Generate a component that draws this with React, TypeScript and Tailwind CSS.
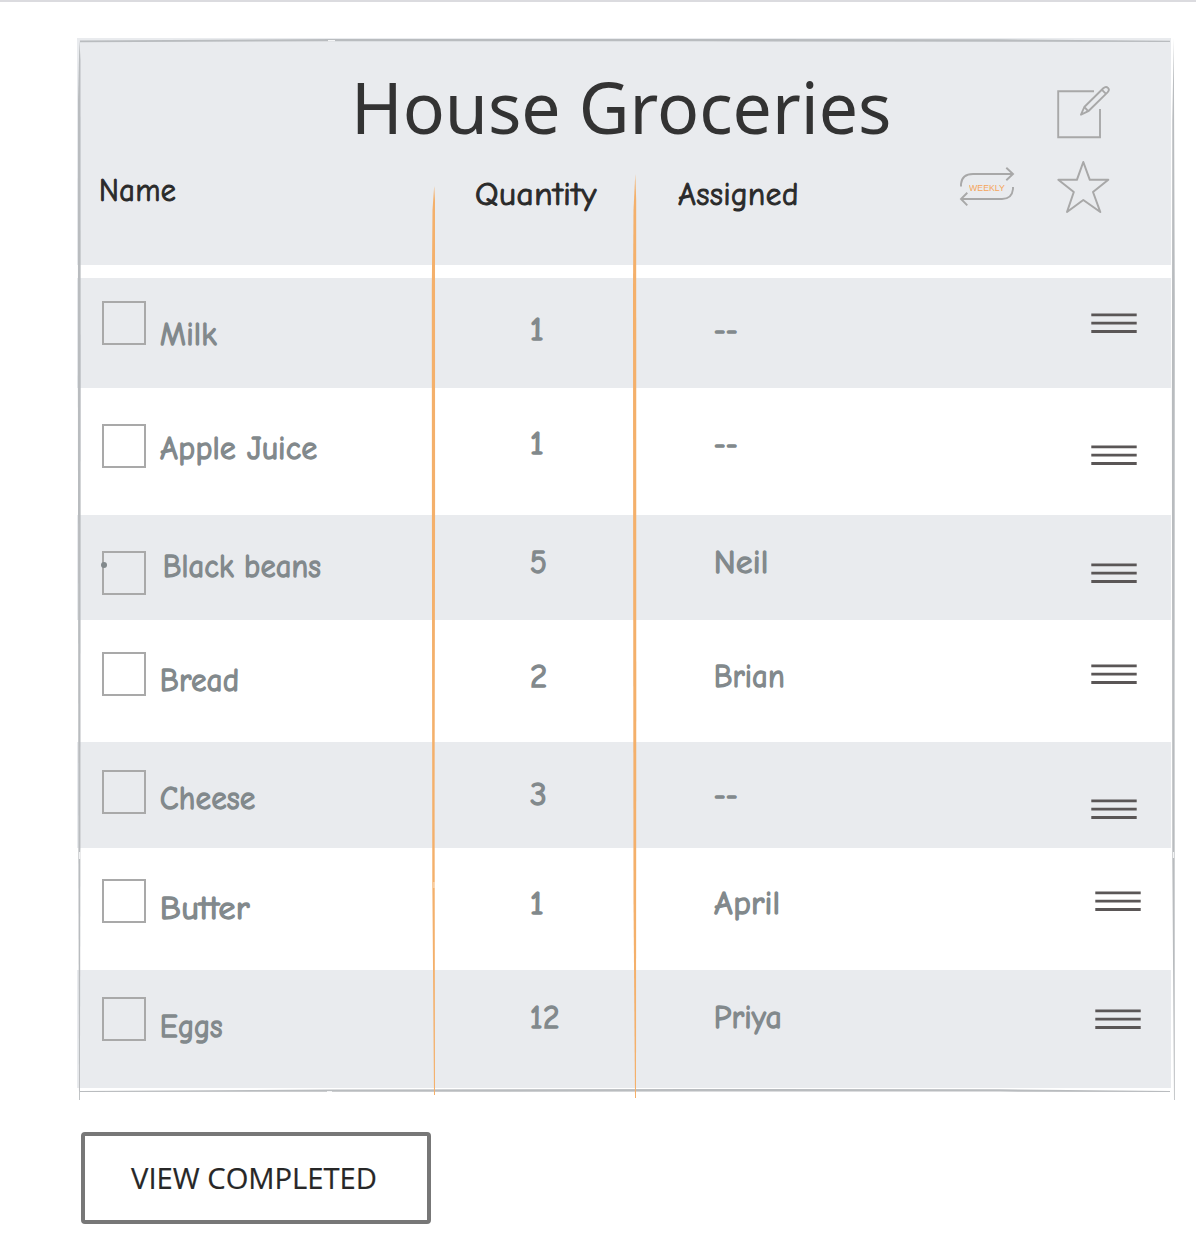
import { useLayoutEffect, useRef, useState } from "react";

/** Text squeezed or stretched horizontally so its advance equals `width`. */
function Fit({ text, width, className = "" }: { text: string; width: number; className?: string }) {
  const ref = useRef<HTMLSpanElement>(null);
  const [scale, setScale] = useState(1);
  useLayoutEffect(() => {
    const measure = () => {
      if (ref.current) setScale(width / ref.current.offsetWidth);
    };
    measure();
    document.fonts?.ready.then(measure);
  }, [text, width]);
  return (
    <div className={`overflow-visible whitespace-nowrap ${className}`} style={{ width }}>
      <span ref={ref} className="inline-block origin-left align-top" style={{ transform: `scaleX(${scale})` }}>
        {text}
      </span>
    </div>
  );
}

const hand =
  "font-['Comic_Sans_MS','Comic_Neue',cursive] text-[32px] leading-8 tracking-[0.6px] [font-feature-settings:'liga'_0,'clig'_0,'calt'_0,'dlig'_0]";
const item = `${hand} text-[#82898c] [-webkit-text-stroke:1.5px_#82898c]`;

type Row = {
  name: string;
  nameW: number;
  qty: string;
  qtyW: number;
  who: string;
  whoW: number;
  row: string;
  box: string;
  nameAt: string;
  valueAt: string;
  handle: string;
  dot?: boolean;
};

const rows: Row[] = [
  { name: "Milk", nameW: 57, qty: "1", qtyW: 14, who: "--", whoW: 24, row: "h-[110px] bg-[#e9ebee]", box: "mt-[23px]", nameAt: "mt-[40.5px] ml-[14px]", valueAt: "mt-[36px]", handle: "mt-[34px] mr-[34px]" },
  { name: "Apple Juice", nameW: 158, qty: "1", qtyW: 14, who: "--", whoW: 24, row: "h-[127px] bg-white", box: "mt-[35.5px]", nameAt: "mt-[45px] ml-[14px]", valueAt: "mt-[40px]", handle: "mt-[55.5px] mr-[34px]" },
  { name: "Black beans", nameW: 158, qty: "5", qtyW: 17.5, who: "Neil", whoW: 55, row: "h-[105px] bg-[#e9ebee]", box: "mt-[35.5px]", nameAt: "mt-[36px] ml-[16.5px]", valueAt: "mt-[32px]", handle: "mt-[47px] mr-[34px]", dot: true },
  { name: "Bread", nameW: 79, qty: "2", qtyW: 17.5, who: "Brian", whoW: 71, row: "h-[122px] bg-white", box: "mt-[31.5px]", nameAt: "mt-[45px] ml-[14px]", valueAt: "mt-[41px]", handle: "mt-[42.5px] mr-[34px]" },
  { name: "Cheese", nameW: 96, qty: "3", qtyW: 17.5, who: "--", whoW: 24, row: "h-[106px] bg-[#e9ebee]", box: "mt-[27.5px]", nameAt: "mt-[41px] ml-[13.5px]", valueAt: "mt-[37px]", handle: "mt-[56px] mr-[34px]" },
  { name: "Butter", nameW: 90, qty: "1", qtyW: 14, who: "April", whoW: 67, row: "h-[122px] bg-white", box: "mt-[31px]", nameAt: "mt-[45px] ml-[14px]", valueAt: "mt-[40px]", handle: "mt-[42px] mr-[30px]" },
  { name: "Eggs", nameW: 63, qty: "12", qtyW: 30.5, who: "Priya", whoW: 68, row: "h-[118px] bg-[#e9ebee]", box: "mt-[27px]", nameAt: "mt-[40.5px] ml-[13.5px]", valueAt: "mt-[32px]", handle: "mt-[38px] mr-[30px]" },
];

function Handle({ className }: { className: string }) {
  return (
    <svg className={`ml-auto h-[22px] w-[46px] shrink-0 ${className}`} viewBox="0 0 46 22" stroke="#5a5656" strokeWidth="2.8">
      <path d="M0.3 2.8H45.7M0.3 11.1H45.7M0.3 19.5H45.7" />
    </svg>
  );
}

function EditIcon() {
  return (
    <svg className="h-[54px] w-[54px]" viewBox="1056 85 54 54" fill="none" stroke="#a8a8a8" strokeWidth="1.9">
      <path d="M1094 91.2H1058.2V137.2H1100V109" />
      <path d="M1081 114.7L1084.3 107L1103.3 88.2C1106.8 85 1110.8 89 1107.5 92.4L1088.3 111.2ZM1102 89.8L1106 93.8M1084.5 107.2L1088 111" strokeLinejoin="round" />
    </svg>
  );
}

function StarIcon() {
  return (
    <svg className="h-[54px] w-[54px]" viewBox="1056 160 54 54" fill="none" stroke="#a8a8a8" strokeWidth="2">
      <path d="M1083.3 162L1089.8 179.8H1108.3L1093 192L1100.3 212L1083.3 200L1067 212L1073.8 192L1058.3 179.8H1076.9Z" strokeLinejoin="round" />
    </svg>
  );
}

function WeeklyIcon() {
  return (
    <div className="relative h-[42px] w-[56px]">
      <svg className="h-[42px] w-[56px]" viewBox="959 166 56 42" fill="none" stroke="#a8a8a8" strokeWidth="1.9">
        <path d="M961 186.5V184Q962 174 973 174H1012.5M1006.3 167.7L1013 174L1006.3 180.3" />
        <path d="M1013 187V189Q1012 199 1002 199H961.5M967.3 192.8L961 199L967.3 205.3" />
      </svg>
      <div className="absolute left-[9.5px] top-[16px] font-['Liberation_Sans',Arial,sans-serif] text-[9.5px] leading-[12px] tracking-normal text-[#f5a55a]">
        <Fit text="WEEKLY" width={36} />
      </div>
    </div>
  );
}

/** Hand-drawn strokes that frame the list and divide its columns. */
function SketchLines() {
  return (
    <svg className="pointer-events-none absolute left-0 top-0 h-[1064px] w-[1100px]" viewBox="77 38 1100 1064">
      <g fill="#b9bcbf">
        <path d="M80 40.5L330 39.1L700 38.9L1000 39.3L1170 40.8V42L1000 41.7L700 41.3L330 41.3L80 42.2Z" />
        <path d="M79.4 40L80.5 60L80.7 400L80.4 860L79.9 1100H79L78.4 860L77.9 400L78 100Z" />
        <path d="M1173.8 38L1174.8 300L1174.6 700L1174.8 1100H1174L1172.3 860L1171.9 400L1172.3 120Z" />
        <path d="M80 1091L330 1089.5L700 1089L1000 1089.3L1170 1091V1092L1000 1091.6L700 1091.5L330 1091.8L80 1092Z" />
      </g>
      <path d="M328 40.7H335M79.7 852V859M1173.5 852V858M327 1091.5H332" stroke="#f3f4f5" strokeWidth="1.2" />
      <g fill="#f4b06b">
        <path d="M434.2 186L435 200L435.1 500L434.6 800L435 1095H434L432.3 880L431.9 500L431.8 290L432.5 210Z" />
        <path d="M635.3 174L636.2 200L636.3 700L636 1098H635L633.5 900L633.2 600L633 290L633.5 210Z" />
      </g>
      <path d="M434 882V888" stroke="#ffe8d0" strokeWidth="1" />
    </svg>
  );
}

export default function App() {
  return (
    <main className="h-[1238px] w-[1196px] overflow-hidden border-t-2 border-[#dbdbdf] bg-white">
      <section className="relative ml-[77px] mt-[36px] w-[1094px]">
        <header className="h-[227px] bg-[#e9ebee]">
          <div className="flex h-[122px]">
            <h1 className="ml-[274px] mt-[26px] font-['Noto_Sans','Open_Sans',sans-serif] text-[70.5px] leading-[86px] text-[#333333]">
              <Fit text="House Groceries" width={540} />
            </h1>
            <button className="ml-auto mr-[61px] mt-[47px] h-[54px]" aria-label="Edit list">
              <EditIcon />
            </button>
          </div>
          <div className={`flex ${hand} text-[#2a2a2a] [-webkit-text-stroke:1px_#2a2a2a]`}>
            <div className="w-[357px] pl-[21.5px] pt-[15px]">
              <Fit text="Name" width={77} />
            </div>
            <div className="w-[201px] pl-[41px] pt-[19px]">
              <Fit text="Quantity" width={122} />
            </div>
            <div className="pl-[43px] pt-[19px]">
              <Fit text="Assigned" width={121} />
            </div>
            <div className="ml-auto mr-[61px] flex [-webkit-text-stroke:0]">
              <button className="mr-[41px] mt-[6px] h-[42px]" aria-label="Repeats weekly">
                <WeeklyIcon />
              </button>
              <button className="h-[54px]" aria-label="Favourite">
                <StarIcon />
              </button>
            </div>
          </div>
        </header>

        <ul className="mt-[13px]">
          {rows.map((r) => (
            <li key={r.name} className={`flex items-start ${r.row}`}>
              <div className="flex w-[357px] items-start pl-[25px]">
                <button className={`relative h-[44px] w-[44px] shrink-0 border-2 border-[#a9a9a9] ${r.box}`} aria-label={`Complete ${r.name}`}>
                  {r.dot && <span className="absolute -left-[3px] top-[9.5px] size-[6px] rounded-full bg-[#82898c]" />}
                </button>
                <Fit text={r.name} width={r.nameW} className={`${item} ${r.nameAt}`} />
              </div>
              <div className="w-[201px] pl-[95.5px]">
                <Fit text={r.qty} width={r.qtyW} className={`${item} ${r.valueAt}`} />
              </div>
              <div className="pl-[79px]">
                <Fit text={r.who} width={r.whoW} className={`${item} ${r.valueAt}`} />
              </div>
              <Handle className={r.handle} />
            </li>
          ))}
        </ul>
        <SketchLines />
      </section>

      <button className="ml-[81px] mt-[44px] flex h-[92px] w-[350px] items-center justify-center rounded-[4px] border-4 border-[#777777] pb-[2px] pr-[5px] font-['Open_Sans','Noto_Sans',sans-serif] text-[30px] text-[#272727] [-webkit-text-stroke:0.2px_#272727]">
        <Fit text="VIEW COMPLETED" width={246} />
      </button>
    </main>
  );
}
